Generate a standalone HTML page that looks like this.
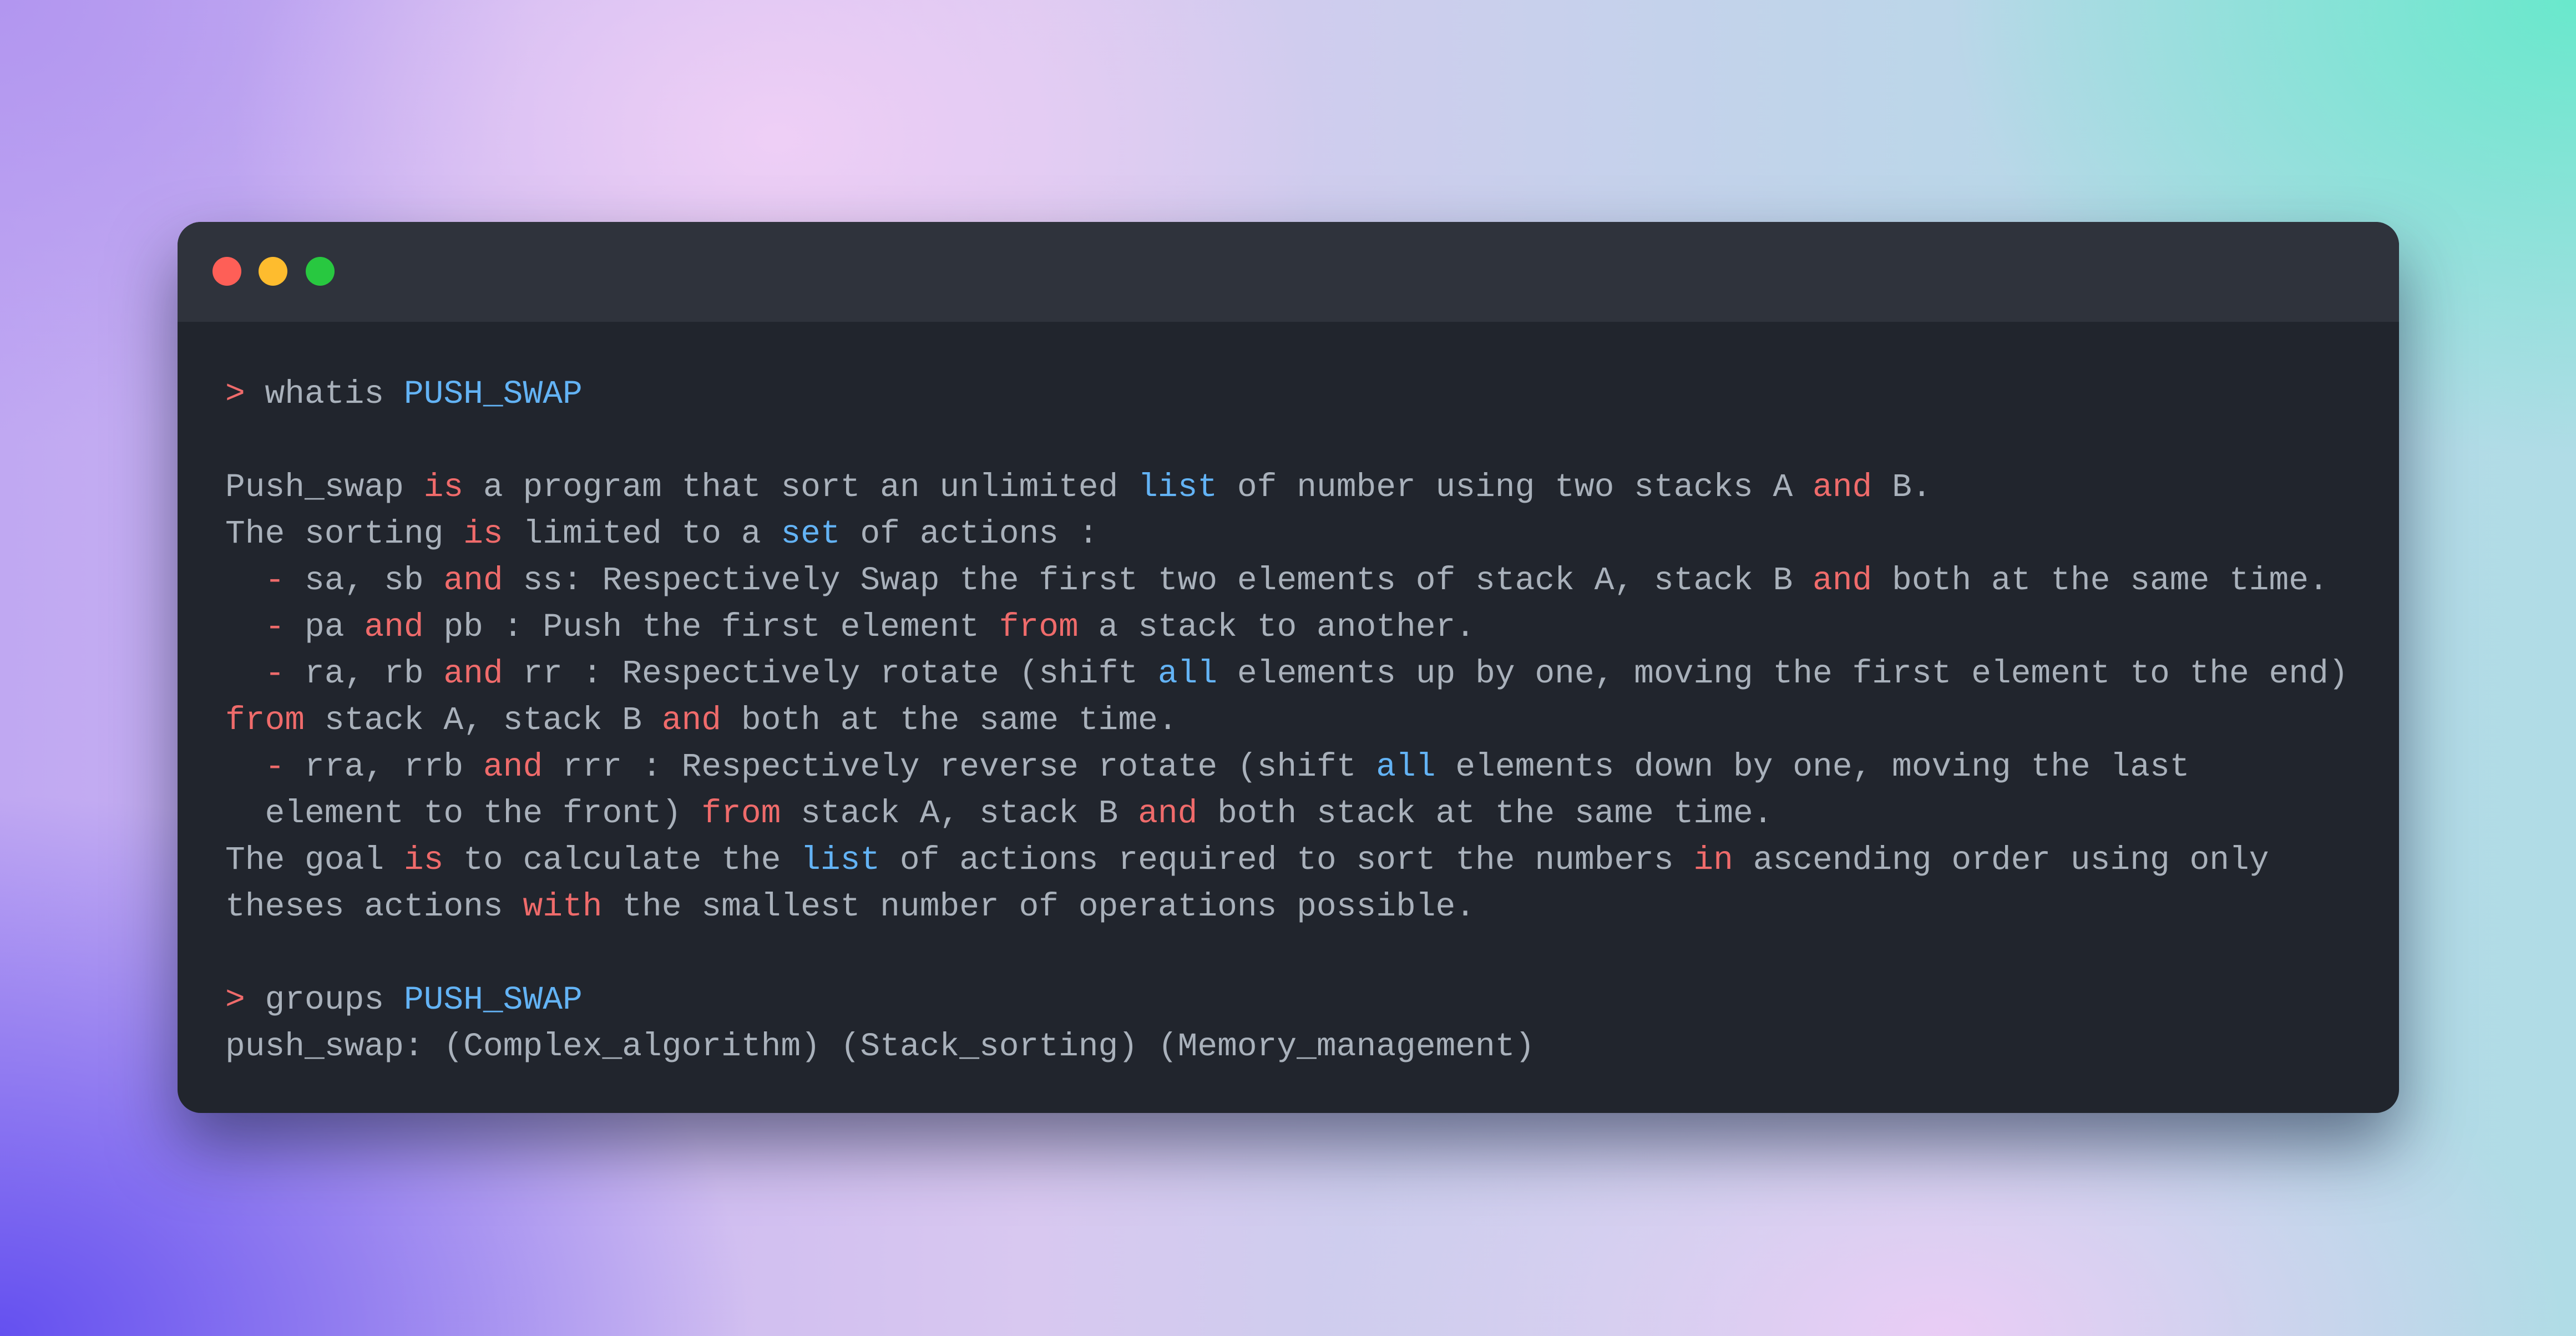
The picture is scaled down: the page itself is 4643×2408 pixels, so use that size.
<!DOCTYPE html>
<html><head><meta charset="utf-8"><style>
html,body{margin:0;padding:0}
body{width:4643px;height:2408px;overflow:hidden;position:relative;
background:
radial-gradient(ellipse 1400px 1000px at 1400px 250px, rgba(240,208,246,0.95), rgba(240,208,246,0) 70%),
radial-gradient(ellipse 1500px 1100px at 4643px 0px, rgba(105,232,204,1), rgba(105,232,204,0) 75%),
radial-gradient(ellipse 1600px 1000px at 3500px 2408px, rgba(236,204,246,0.95), rgba(236,204,246,0) 70%),
radial-gradient(ellipse 1800px 1300px at 0px 2408px, rgba(100,80,240,1), rgba(100,80,240,0) 75%),
radial-gradient(ellipse 1200px 1000px at 0px 0px, rgba(178,150,240,1), rgba(178,150,240,0) 80%),
linear-gradient(90deg,#c0a8f2 0%,#d8c8f0 40%,#b8d8e8 80%,#b0dce6 100%);}
.win{position:absolute;left:320px;top:400px;width:4004px;height:1606px;border-radius:42px;background:#21252d;overflow:hidden;
box-shadow:0 60px 120px rgba(20,30,60,0.55);}
.bar{height:180px;background:#2f333c;position:relative}
.dot{position:absolute;width:52px;height:52px;border-radius:50%}
.bar .dot{top:63px}
pre{margin:0;position:absolute;left:86px;top:268px;font-family:"Liberation Mono",monospace;font-size:59.6px;line-height:84px;color:#a9b1bb;white-space:pre}
.r{color:#ef6b6b}.b{color:#63b3f5}
</style></head><body>
<div class="win">
<div class="bar">
<div class="dot" style="left:63px;background:#fe5f57"></div>
<div class="dot" style="left:146px;background:#febc2e"></div>
<div class="dot" style="left:231px;background:#28c840"></div>
</div>
<pre><span class="r">&gt;</span> whatis <span class="b">PUSH_SWAP</span>

Push_swap <span class="r">is</span> a program that sort an unlimited <span class="b">list</span> of number using two stacks A <span class="r">and</span> B.
The sorting <span class="r">is</span> limited to a <span class="b">set</span> of actions :
  <span class="r">-</span> sa, sb <span class="r">and</span> ss: Respectively Swap the first two elements of stack A, stack B <span class="r">and</span> both at the same time.
  <span class="r">-</span> pa <span class="r">and</span> pb : Push the first element <span class="r">from</span> a stack to another.
  <span class="r">-</span> ra, rb <span class="r">and</span> rr : Respectively rotate (shift <span class="b">all</span> elements up by one, moving the first element to the end)
<span class="r">from</span> stack A, stack B <span class="r">and</span> both at the same time.
  <span class="r">-</span> rra, rrb <span class="r">and</span> rrr : Respectively reverse rotate (shift <span class="b">all</span> elements down by one, moving the last
  element to the front) <span class="r">from</span> stack A, stack B <span class="r">and</span> both stack at the same time.
The goal <span class="r">is</span> to calculate the <span class="b">list</span> of actions required to sort the numbers <span class="r">in</span> ascending order using only
theses actions <span class="r">with</span> the smallest number of operations possible.

<span class="r">&gt;</span> groups <span class="b">PUSH_SWAP</span>
push_swap: (Complex_algorithm) (Stack_sorting) (Memory_management)</pre>
</div>
</body></html>
